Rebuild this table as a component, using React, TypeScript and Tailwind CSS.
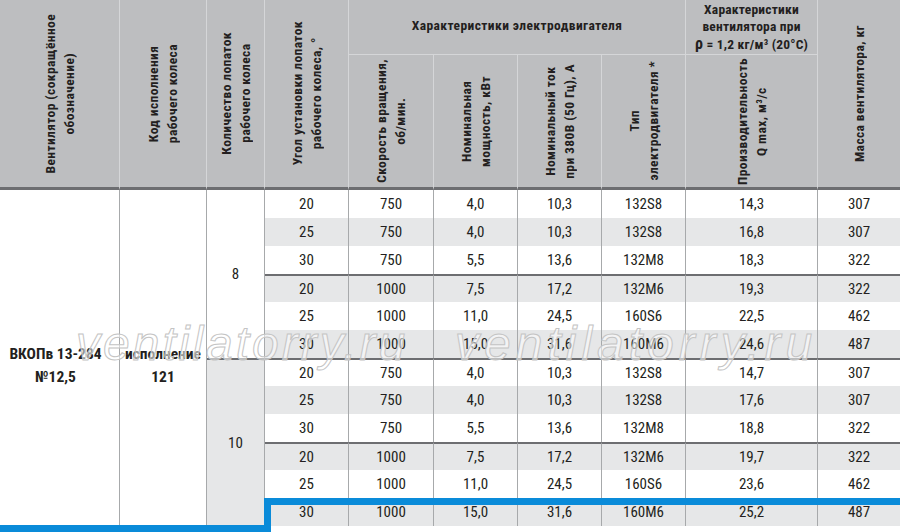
import type { ReactNode } from 'react';

type Row = [number, number, string, string, string, string, number];

const groups: { blades: number; rows: Row[] }[] = [
  {
    blades: 8,
    rows: [
      [20, 750, '4,0', '10,3', '132S8', '14,3', 307],
      [25, 750, '4,0', '10,3', '132S8', '16,8', 307],
      [30, 750, '5,5', '13,6', '132M8', '18,3', 322],
      [20, 1000, '7,5', '17,2', '132M6', '19,3', 322],
      [25, 1000, '11,0', '24,5', '160S6', '22,5', 462],
      [30, 1000, '15,0', '31,6', '160M6', '24,6', 487],
    ],
  },
  {
    blades: 10,
    rows: [
      [20, 750, '4,0', '10,3', '132S8', '14,7', 307],
      [25, 750, '4,0', '10,3', '132S8', '17,6', 307],
      [30, 750, '5,5', '13,6', '132M8', '18,8', 322],
      [20, 1000, '7,5', '17,2', '132M6', '19,7', 322],
      [25, 1000, '11,0', '24,5', '160S6', '23,6', 462],
      [30, 1000, '15,0', '31,6', '160M6', '25,2', 487],
    ],
  },
];

const widths = [120, 87, 58, 84, 85, 84, 84, 84, 132, 82];

// rotated header label, reads bottom to top; fixed box so it never grows the row
function V({ h, children }: { h: string; children: ReactNode }) {
  return (
    <div className={`flex items-center justify-center ${h}`}>
      <div className="rotate-180 whitespace-nowrap text-center leading-[19px] [writing-mode:vertical-rl]">
        {children}
      </div>
    </div>
  );
}

const th = 'border-r border-[#d5d6d8] p-0 align-middle text-center font-bold';
const thick = 'border-b-[3px] border-b-[#6d6e71]';

function Watermark({ className }: { className: string }) {
  return (
    <div
      className={`pointer-events-none absolute font-['Liberation_Sans',sans-serif] text-[48px] italic leading-none text-[rgba(255,255,255,0.55)] [-webkit-text-stroke:1px_#c4c4c4] ${className}`}
    >
      ventilatorry.ru
    </div>
  );
}

export default function App() {
  return (
    <div className="relative h-[532px] w-[900px] overflow-hidden bg-white font-['Roboto_Condensed','Roboto',sans-serif] text-[#231f20]">
      <table className="w-[900px] table-fixed border-separate border-spacing-0">
        <colgroup>
          {widths.map((w, i) => (
            <col key={i} style={{ width: w }} />
          ))}
        </colgroup>
        <thead className="bg-[#bdbec0] text-[13.5px] tracking-[0.4px]">
          <tr className="h-[55px]">
            <th rowSpan={2} className={`${th} ${thick}`}>
              <V h="h-[187px]">
                Вентилятор (сокращённое
                <br />
                обозначение)
              </V>
            </th>
            <th rowSpan={2} className={`${th} ${thick}`}>
              <V h="h-[187px]">
                Код исполнения
                <br />
                рабочего колеса
              </V>
            </th>
            <th rowSpan={2} className={`${th} ${thick}`}>
              <V h="h-[187px]">
                Количество лопаток
                <br />
                рабочего колеса
              </V>
            </th>
            <th rowSpan={2} className={`${th} ${thick}`}>
              <V h="h-[187px]">
                Угол установки лопаток
                <br />
                рабочего колеса, °
              </V>
            </th>
            <th colSpan={4} className={`${th} h-[55px] border-b border-b-[#d5d6d8] pb-[3px]`}>
              Характеристики электродвигателя
            </th>
            <th className={`${th} h-[55px] whitespace-nowrap border-b border-b-[#d5d6d8] leading-[17px] tracking-[0.2px]`}>
              Характеристики
              <br />
              вентилятора при
              <br />
              <span className="text-[16px]">ρ</span> = 1,2 кг/м³ (20°С)
            </th>
            <th rowSpan={2} className={`p-0 text-center align-middle font-bold ${thick}`}>
              <V h="h-[187px]">Масса вентилятора, кг</V>
            </th>
          </tr>
          <tr className="h-[132px]">
            <th className={`${th} ${thick}`}>
              <V h="h-[132px]">
                Скорость вращения,
                <br />
                об/мин.
              </V>
            </th>
            <th className={`${th} ${thick}`}>
              <V h="h-[132px]">
                Номинальная
                <br />
                мощность, кВт
              </V>
            </th>
            <th className={`${th} ${thick}`}>
              <V h="h-[132px]">
                Номинальный ток
                <br />
                при 380В (50 Гц), А
              </V>
            </th>
            <th className={`${th} ${thick}`}>
              <V h="h-[132px]">
                Тип
                <br />
                электродвигателя *
              </V>
            </th>
            <th className={`${th} ${thick}`}>
              <V h="h-[132px]">
                Производительность
                <br />
                Q max, м³/с
              </V>
            </th>
          </tr>
        </thead>
        <tbody className="text-[15px]">
          {groups.map((g, gi) =>
            g.rows.map((r, ri) => {
              const gray = ri % 2 === 1;
              const sep = ri === 3 || (gi === 1 && ri === 0);
              const cell = `h-[28px] p-0 text-center align-middle ${
                sep ? 'border-t-2 border-t-[#6d6e71]' : ''
              }`;
              return (
                <tr key={`${gi}-${ri}`} className={gray ? 'bg-[#e6e7e8]' : 'bg-white'}>
                  {gi === 0 && ri === 0 && (
                    <>
                      <td rowSpan={12} className="border-r border-[#a7a9ab] bg-white p-0 pr-[8px] pt-[16px] text-center align-middle text-[15.5px] font-bold leading-[23px]">
                        ВКОПв 13-284
                        <br />
                        №12,5
                      </td>
                      <td rowSpan={12} className="border-r border-[#a7a9ab] bg-white p-0 pt-[16px] text-center align-middle text-[15.5px] font-bold leading-[23px]">
                        исполнение
                        <br />
                        121
                      </td>
                    </>
                  )}
                  {ri === 0 && (
                    <td
                      rowSpan={6}
                      className={`border-r border-[#a7a9ab] p-0 text-center align-middle ${
                        gi === 1 ? 'border-t-2 border-t-[#6d6e71] bg-[#e6e7e8]' : 'bg-white'
                      }`}
                    >
                      {g.blades}
                    </td>
                  )}
                  {r.map((v, ci) => (
                    <td
                      key={ci}
                      className={`${cell} ${ci < r.length - 1 ? 'border-r border-r-[#a7a9ab]' : ''}`}
                    >
                      {v}
                    </td>
                  ))}
                </tr>
              );
            }),
          )}
        </tbody>
      </table>

      <Watermark className="left-[76px] top-[320px] tracking-[3px]" />
      <Watermark className="left-[455px] top-[320px] tracking-[5px]" />

      {/* blue highlight outline */}
      <div className="absolute bottom-0 left-0 h-[7px] w-[271px] bg-[#0a8bd9]" />
      <div className="absolute left-[264px] top-[498px] h-[34px] w-[7px] bg-[#0a8bd9]" />
      <div className="absolute left-[264px] right-0 top-[498px] h-[7px] bg-[#0a8bd9]" />
    </div>
  );
}
